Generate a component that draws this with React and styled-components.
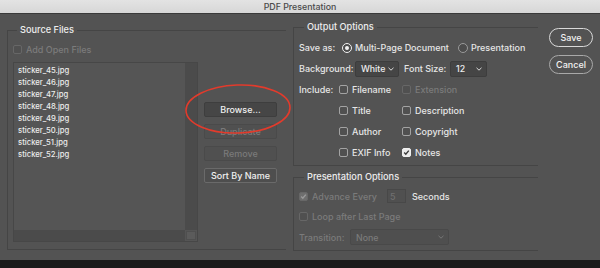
import React from 'react'
import styled, { createGlobalStyle } from 'styled-components'

const GlobalStyle = createGlobalStyle`
  html, body {
    margin: 0;
    padding: 0;
    background: #1b1b1b;
  }
`

const Window = styled.div`
  width: 600px;
  height: 268px;
  display: flex;
  flex-direction: column;
  overflow: hidden;
  font-family: Inter, "Liberation Sans", sans-serif;
  font-size: 9px;
  font-weight: 500;
  color: #e6e6e6;
`

const TitleBar = styled.div`
  flex: none;
  height: 13px;
  background: linear-gradient(#e3e3e3, #d7d7d7);
  border-bottom: 1px solid #3a3a3a;
  display: flex;
  align-items: center;
  justify-content: center;
  color: #4a4a4a;
  font-size: 8.8px;
  line-height: 13px;
`

const Body = styled.div`
  position: relative;
  flex: none;
  height: 246px;
  box-sizing: border-box;
  padding: 0 7px;
  background: #535353;
  display: flex;
  align-items: flex-start;
`

const BottomBar = styled.div`
  flex: 1;
  background: #1b1b1b;
`

const Group = styled.fieldset`
  box-sizing: border-box;
  min-width: 0;
  width: ${p => p.$w}px;
  height: ${p => (p.$h ? `${p.$h}px` : 'auto')};
  margin: ${p => p.$mt}px 0 0;
  padding: ${p => p.$pad};
  border: 1px solid #454545;
  border-right: none;
`

const Legend = styled.legend`
  padding: 0 3px;
  margin-left: ${p => p.$ml}px;
  font-size: 9.2px;
  line-height: 12px;
  color: #ededed;
`

const Column = styled.div`
  display: flex;
  flex-direction: column;
  width: ${p => p.$w}px;
  margin-left: ${p => p.$ml}px;
  margin-top: ${p => p.$mt || 0}px;
  gap: ${p => p.$gap || 0}px;
`

const Row = styled.div`
  display: flex;
  align-items: center;
  height: ${p => p.$h || 21}px;
  margin-top: ${p => p.$mt || 0}px;
`

const Label = styled.span`
  flex: none;
  width: ${p => (p.$w ? `${p.$w}px` : 'auto')};
  margin-left: ${p => p.$ml || 0}px;
  color: ${p => (p.$dim ? '#7b7b7b' : '#e6e6e6')};
  white-space: nowrap;
`

const Box = styled.span`
  flex: none;
  box-sizing: border-box;
  width: 9px;
  height: 9px;
  margin-right: 4px;
  border-radius: 2px;
  border: 1px solid ${p => (p.$disabled ? '#676767' : p.$checked ? '#f0f0f0' : '#a3a3a3')};
  background: ${p => (p.$checked ? (p.$disabled ? '#6e6e6e' : '#ececec') : '#505050')};
  display: flex;
  align-items: center;
  justify-content: center;
  color: ${p => (p.$disabled ? '#9a9a9a' : '#3a3a3a')};
`

const CheckItem = styled.span`
  display: flex;
  align-items: center;
  width: ${p => (p.$w ? `${p.$w}px` : 'auto')};
  flex: none;
`

const Check = ({ label, checked, disabled, w }) => (
  <CheckItem $w={w}>
    <Box $checked={checked} $disabled={disabled}>
      {checked && (
        <svg width="7" height="7" viewBox="0 0 7 7">
          <polyline points="1.2,3.6 2.8,5.2 5.8,1.6" fill="none" stroke="currentColor" strokeWidth="1.4" />
        </svg>
      )}
    </Box>
    <Label $dim={disabled}>{label}</Label>
  </CheckItem>
)

const Ring = styled.span`
  flex: none;
  box-sizing: border-box;
  width: 10px;
  height: 10px;
  margin-right: 3px;
  border-radius: 50%;
  border: ${p => (p.$on ? '1.5px solid #f2f2f2' : '1px solid #9a9a9a')};
  background: #4c4c4c;
  display: flex;
  align-items: center;
  justify-content: center;

  &::after {
    content: '';
    display: ${p => (p.$on ? 'block' : 'none')};
    width: 4px;
    height: 4px;
    border-radius: 50%;
    background: #f2f2f2;
  }
`

const Radio = ({ label, on, w }) => (
  <CheckItem $w={w}>
    <Ring $on={on} />
    <Label>{label}</Label>
  </CheckItem>
)

const SelectBox = styled.div`
  flex: none;
  box-sizing: border-box;
  width: ${p => p.$w}px;
  height: 16px;
  padding: 0 4px 0 5px;
  border-radius: 2px;
  border: 1px solid ${p => (p.$disabled ? '#494949' : '#3d3d3d')};
  background: ${p => (p.$disabled ? '#4f4f4f' : '#454545')};
  color: ${p => (p.$disabled ? '#7b7b7b' : '#ededed')};
  font-size: 8.8px;
  display: flex;
  align-items: center;
  justify-content: space-between;
`

const ChevronIcon = styled.svg`
  flex: none;
  display: block;
`

const Chevron = () => (
  <ChevronIcon width="6" height="4" viewBox="0 0 6 4">
    <polyline points="0.5,0.8 3,3.2 5.5,0.8" fill="none" stroke="currentColor" strokeWidth="0.9" />
  </ChevronIcon>
)

const Select = ({ value, w, disabled }) => (
  <SelectBox $w={w} $disabled={disabled}>
    <span>{value}</span>
    <Chevron />
  </SelectBox>
)

const NumberBox = styled.div`
  flex: none;
  box-sizing: border-box;
  width: 19px;
  height: 14px;
  padding-left: 2px;
  border: 1px solid #484848;
  background: #505050;
  color: #6f6f6f;
  display: flex;
  align-items: center;
`

const IncludeGrid = styled.div`
  display: grid;
  grid-template-columns: 40px 63px auto;
  grid-auto-rows: 21px;
  align-items: center;
`

const SourceBody = styled.div`
  display: flex;
  margin-top: 7px;
`

const FileList = styled.div`
  box-sizing: border-box;
  width: 185px;
  height: 180px;
  border: 1px solid #474747;
  display: grid;
  grid-template-columns: 1fr 12px;
  grid-template-rows: 1fr 11px;
  background: #555555;
`

const Items = styled.ul`
  margin: 0;
  padding: 2px 0 0 4px;
  list-style: none;
  font-size: 7.7px;
  line-height: 12px;
  color: #ececec;
`

const VTrack = styled.div`
  background: #4b4b4b;
`

const HTrack = styled.div`
  background: #4b4b4b;
`

const Corner = styled.div`
  margin: 1px;
  background: #5b5b5b;
  border: 1px solid #4f4f4f;
`

const SideButton = styled.div`
  box-sizing: border-box;
  height: 15px;
  border-radius: 2px;
  border: 1px solid ${p => (p.$strong ? '#6a6a6a' : p.$disabled ? '#4a4a4a' : '#3e3e3e')};
  background: ${p => (p.$disabled ? '#505050' : p.$strong ? '#4e4e4e' : '#464646')};
  color: ${p => (p.$disabled ? '#7a7a7a' : '#f0f0f0')};
  display: flex;
  align-items: center;
  justify-content: center;
`

const PillButton = styled.div`
  box-sizing: border-box;
  height: 19px;
  border-radius: 10px;
  border: 1px solid ${p => (p.$primary ? '#d9d9d9' : '#a9a9a9')};
  color: #f2f2f2;
  display: flex;
  align-items: center;
  justify-content: center;
`

const Annotation = styled.svg`
  position: absolute;
  left: 184px;
  top: 69px;
  pointer-events: none;
`

const files = [45, 46, 47, 48, 49, 50, 51, 52]

export default function App() {
  return (
    <Window>
      <GlobalStyle />
      <TitleBar>PDF Presentation</TitleBar>
      <Body>
        <Group $w={279} $h={226} $mt={10} $pad="0 0 0 5px">
          <Legend $ml={4}>Source Files</Legend>
          <Row $h={12} $mt={7}>
            <Check label="Add Open Files" disabled />
          </Row>
          <SourceBody>
            <FileList>
              <Items>
                {files.map(n => (
                  <li key={n}>sticker_{n}.jpg</li>
                ))}
              </Items>
              <VTrack />
              <HTrack />
              <Corner />
            </FileList>
            <Column $w={73} $ml={6} $mt={40} $gap={7}>
              <SideButton>Browse...</SideButton>
              <SideButton $disabled>Duplicate</SideButton>
              <SideButton $disabled>Remove</SideButton>
              <SideButton $strong>Sort By Name</SideButton>
            </Column>
          </SourceBody>
        </Group>

        <Column $w={245} $ml={7}>
          <Group $w={245} $mt={7} $pad="4px 0 2px 5px">
            <Legend $ml={5}>Output Options</Legend>
            <Row>
              <Label $w={43}>Save as:</Label>
              <Radio label="Multi-Page Document" on w={116} />
              <Radio label="Presentation" />
            </Row>
            <Row>
              <Label $w={56}>Background:</Label>
              <Select value="White" w={44} />
              <Label $w={46} $ml={5}>Font Size:</Label>
              <Select value="12" w={37} />
            </Row>
            <IncludeGrid>
              <Label>Include:</Label>
              <Check label="Filename" />
              <Check label="Extension" disabled />
              <span />
              <Check label="Title" />
              <Check label="Description" />
              <span />
              <Check label="Author" />
              <Check label="Copyright" />
              <span />
              <Check label="EXIF Info" />
              <Check label="Notes" checked />
            </IncludeGrid>
          </Group>

          <Group $w={245} $mt={5} $pad="3px 0 2px 5px">
            <Legend $ml={5}>Presentation Options</Legend>
            <Row $h={20}>
              <Check label="Advance Every" checked disabled w={88} />
              <NumberBox>5</NumberBox>
              <Label $ml={6}>Seconds</Label>
            </Row>
            <Row $h={20}>
              <Check label="Loop after Last Page" disabled />
            </Row>
            <Row $h={22}>
              <Label $w={51} $dim>Transition:</Label>
              <Select value="None" w={99} disabled />
            </Row>
          </Group>
        </Column>

        <Column $w={44} $ml={11} $mt={14} $gap={8}>
          <PillButton $primary>Save</PillButton>
          <PillButton>Cancel</PillButton>
        </Column>

        <Annotation width="108" height="52" viewBox="0 0 108 52">
          <ellipse cx="54" cy="26" rx="52" ry="24" fill="none" stroke="#e23b2c" strokeWidth="1.6" transform="rotate(-2 54 26)" />
        </Annotation>
      </Body>
      <BottomBar />
    </Window>
  )
}
